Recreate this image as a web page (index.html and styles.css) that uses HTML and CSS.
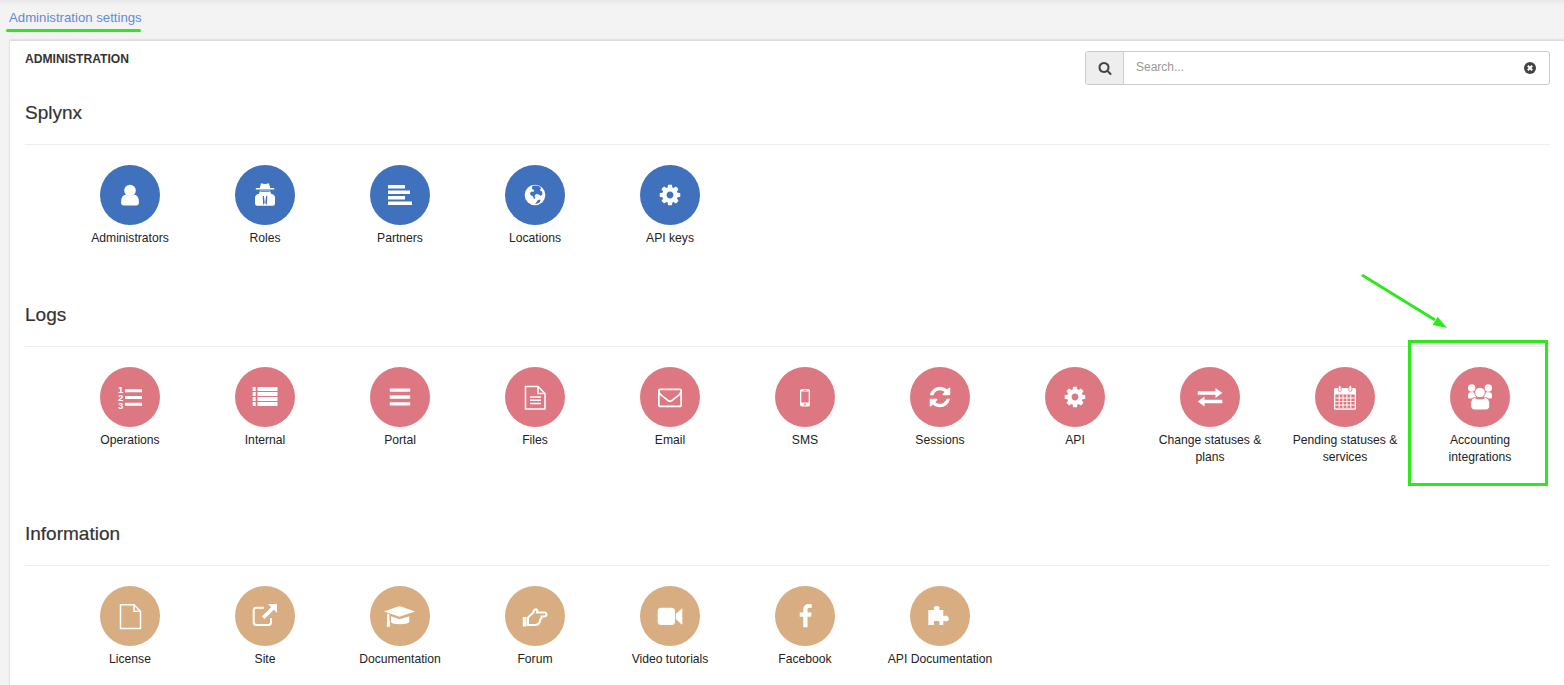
FILE: index.html
```html
<!DOCTYPE html>
<html>
<head>
  <meta charset="UTF-8"/>
  <title>Administration</title>
  <link rel="stylesheet" href="styles.css">
</head>
<body>
<div class="crumbs"><a href="#">Administration settings</a></div>

<div class="card">
  <div class="card-head">
    <div class="card-title">ADMINISTRATION</div>
    <div class="search">
      <span class="search-addon">
        <svg class="ic14" viewBox="0 0 1792 1792"><path d="M1216 832q0-185-131.5-316.5t-316.5-131.5-316.5 131.5-131.5 316.5 131.5 316.5 316.5 131.5 316.5-131.5 131.5-316.5zm512 832q0 52-38 90t-90 38q-54 0-90-38l-343-342q-179 124-399 124-143 0-273.5-55.5t-225-150-150-225-55.5-273.5 55.5-273.5 150-225 225-150 273.5-55.5 273.5 55.5 225 150 150 225 55.5 273.5q0 220-124 399l343 343q37 37 37 90z"/></svg>
      </span>
      <input class="search-input" type="text" placeholder="Search..."/>
      <svg class="search-clear" viewBox="0 0 12 12"><circle cx="6" cy="6" r="6"/><path d="M3.8 3.8l4.4 4.4M8.2 3.8l-4.4 4.4"/></svg>
    </div>
  </div>

  <!-- Splynx -->
  <div class="section section-first">
    <h3>Splynx</h3>
    <div class="items tone-blue">
      <a class="item"><span class="circle">
        <svg class="ic30" viewBox="0 0 30 30"><circle cx="15" cy="10.5" r="5.8"/><path d="M6 22.5q0-7.5 5-8 2 1.5 4 1.5t4-1.5q5 .5 5 8 0 3-3 3H9q-3 0-3-3z"/></svg>
      </span><span class="label">Administrators</span></a>
      <a class="item"><span class="circle">
        <svg class="ic30" viewBox="0 0 30 30"><path d="M9.800 8l1.200-4.700q4 1.400 8 0L20.200 8h4v1.400H5.800V8z"/><path d="M5 23.500v-6q0-2.700 4-3.700l1-3.300h10l1 3.300q4 1 4 3.700v6q0 2.200-2 2.200H7q-2 0-2-2.200z"/><path class="cut" d="M12.700 16h1.200l.8 7-1.500 2zM16.100 16h1.200l-.5 9-1.500-2z"/><path class="cut" d="M10.300 10.700h9.400v1.100h-9.400z"/></svg>
      </span><span class="label">Roles</span></a>
      <a class="item"><span class="circle">
        <svg class="ic30" viewBox="0 0 30 30"><path d="M3 5h17v3.500H3zM3 10.500h22V14H3zM3 16h17v3.500H3zM3 21.500h24V25H3z"/></svg>
      </span><span class="label">Partners</span></a>
      <a class="item"><span class="circle">
        <svg class="ic30" viewBox="0 0 30 30"><circle cx="15" cy="15" r="10.300"/><path class="cut" d="M12 6.500l2-1 5 .5 2 2-1 2.500 2 1 .5 3-2 1.500-1.500-1.500-3-.5-1.500 2 1 2-1.500 1-1-2.500-2.500-1.500-.5-2 1.500-1.500 2 .5.500-2-2-1zM18 20l2.500-.5-.5 2.500-2.500 1.500-2.500.5z"/></svg>
      </span><span class="label">Locations</span></a>
      <a class="item"><span class="circle">
        <svg class="ic24" viewBox="0 0 1792 1792"><path d="M1152 896q0-106-75-181t-181-75-181 75-75 181 75 181 181 75 181-75 75-181zm512-109v222q0 12-8 23t-20 13l-185 28q-19 54-39 91 35 50 107 138 10 12 10 25t-9 23q-27 37-99 108t-94 71q-12 0-26-9l-138-108q-44 23-91 38-16 136-29 186-7 28-36 28h-222q-14 0-24.500-8.500t-11.500-21.500l-28-184q-49-16-90-37l-141 107q-10 9-25 9-14 0-25-11-126-114-165-168-7-10-7-23 0-12 8-23 15-21 51-66.500t54-70.500q-27-50-41-99l-183-27q-13-2-21-12.500t-8-23.500v-222q0-12 8-23t19-13l186-28q14-46 39-92-40-57-107-138-10-12-10-24 0-10 9-23 26-36 98.500-107.500t94.500-71.500q13 0 26 10l138 107q44-23 91-38 16-136 29-186 7-28 36-28h222q14 0 24.500 8.500t11.500 21.500l28 184q49 16 90 37l142-107q9-9 24-9 13 0 25 10 129 119 165 170 7 8 7 22 0 12-8 23-15 21-51 66.500t-54 70.500q26 50 41 98l183 28q13 2 21 12.500t8 23.500z"/></svg>
      </span><span class="label">API keys</span></a>
    </div>
  </div>

  <!-- Logs -->
  <div class="section">
    <h3>Logs</h3>
    <div class="items tone-pink">
      <a class="item"><span class="circle">
        <svg class="ic30" viewBox="0 0 30 30"><path d="M10 7.300h17v3H10zM10 14h17v3H10zM10 20.700h17v3H10z"/><text class="digit" x="3" y="10.600">1</text><text class="digit" x="3" y="18.800">2</text><text class="digit" x="3" y="27">3</text></svg>
      </span><span class="label">Operations</span></a>
      <a class="item"><span class="circle">
        <svg class="ic30" viewBox="0 0 30 30"><path d="M2.700 5h3v4h-3zM2.700 10h3v4h-3zM2.700 15h3v4h-3zM2.700 20h3v4h-3zM7.500 5h20v4h-20zM7.500 10h20v4h-20zM7.500 15h20v4h-20zM7.500 20h20v4h-20z"/></svg>
      </span><span class="label">Internal</span></a>
      <a class="item"><span class="circle">
        <svg class="ic24" viewBox="0 0 1792 1792"><path d="M1664 1344v128q0 26-19 45t-45 19h-1408q-26 0-45-19t-19-45v-128q0-26 19-45t45-19h1408q26 0 45 19t19 45zm0-512v128q0 26-19 45t-45 19h-1408q-26 0-45-19t-19-45v-128q0-26 19-45t45-19h1408q26 0 45 19t19 45zm0-512v128q0 26-19 45t-45 19h-1408q-26 0-45-19t-19-45v-128q0-26 19-45t45-19h1408q26 0 45 19t19 45z"/></svg>
      </span><span class="label">Portal</span></a>
      <a class="item"><span class="circle">
        <svg class="ic30" viewBox="0 0 30 30"><path class="line" d="M5.500 4.500H18L25 11.500V27H5.500zM18 4.500v7h7"/><path class="line" d="M10 15h11M10 18.300h11M10 21.600h11"/></svg>
      </span><span class="label">Files</span></a>
      <a class="item"><span class="circle">
        <svg class="ic24" viewBox="0 0 1792 1792"><path d="M1664 1504v-768q-32 36-69 66-268 206-426 338-51 43-83 67t-86.500 48.500-102.500 24.500h-2q-48 0-102.500-24.500t-86.500-48.500-83-67q-158-132-426-338-37-30-69-66v768q0 13 9.500 22.500t22.500 9.500h1472q13 0 22.500-9.500t9.500-22.500zm0-1051v-24.500l-.5-13-3-12.500-5.500-9-9-7.500-14-2.500h-1472q-13 0-22.500 9.500t-9.500 22.500q0 168 147 284 193 152 401 317 6 5 35 29.500t46 37.500 44.500 31.500 50.500 27.500 43 9h2q20 0 43-9t50.500-27.500 44.500-31.500 46-37.500 35-29.500q208-165 401-317 54-43 100.500-115.500t46.500-131.500zm128-37v1088q0 66-47 113t-113 47h-1472q-66 0-113-47t-47-113v-1088q0-66 47-113t113-47h1472q66 0 113 47t47 113z"/></svg>
      </span><span class="label">Email</span></a>
      <a class="item"><span class="circle">
        <svg class="ic30" viewBox="0 0 30 30"><rect x="10" y="7" width="10" height="17.500" rx="2"/><path class="cut" d="M11.300 9.500h7.400v11h-7.400zM13.500 8h3v.7h-3z"/><circle class="cut" cx="15" cy="22.500" r=".9"/></svg>
      </span><span class="label">SMS</span></a>
      <a class="item"><span class="circle">
        <svg class="ic24" viewBox="0 0 1792 1792"><path d="M1639 1056q0 5-1 7-64 268-268 434.500t-478 166.500q-146 0-282.500-55t-243.500-157l-129 129q-19 19-45 19t-45-19-19-45v-448q0-26 19-45t45-19h448q26 0 45 19t19 45-19 45l-137 137q71 66 161 102t187 36q134 0 250-65t186-179q11-17 53-117 8-23 30-23h192q13 0 22.500 9.500t9.500 22.500zm25-800v448q0 26-19 45t-45 19h-448q-26 0-45-19t-19-45 19-45l138-138q-148-137-349-137-134 0-250 65t-186 179q-11 17-53 117-8 23-30 23h-199q-13 0-22.500-9.500t-9.500-22.500v-7q65-268 270-434.500t480-166.500q146 0 284 55.500t245 156.500l130-129q19-19 45-19t45 19 19 45z"/></svg>
      </span><span class="label">Sessions</span></a>
      <a class="item"><span class="circle">
        <svg class="ic24" viewBox="0 0 1792 1792"><path d="M1152 896q0-106-75-181t-181-75-181 75-75 181 75 181 181 75 181-75 75-181zm512-109v222q0 12-8 23t-20 13l-185 28q-19 54-39 91 35 50 107 138 10 12 10 25t-9 23q-27 37-99 108t-94 71q-12 0-26-9l-138-108q-44 23-91 38-16 136-29 186-7 28-36 28h-222q-14 0-24.500-8.500t-11.500-21.500l-28-184q-49-16-90-37l-141 107q-10 9-25 9-14 0-25-11-126-114-165-168-7-10-7-23 0-12 8-23 15-21 51-66.500t54-70.500q-27-50-41-99l-183-27q-13-2-21-12.500t-8-23.500v-222q0-12 8-23t19-13l186-28q14-46 39-92-40-57-107-138-10-12-10-24 0-10 9-23 26-36 98.500-107.500t94.500-71.500q13 0 26 10l138 107q44-23 91-38 16-136 29-186 7-28 36-28h222q14 0 24.500 8.500t11.500 21.500l28 184q49 16 90 37l142-107q9-9 24-9 13 0 25 10 129 119 165 170 7 8 7 22 0 12-8 23-15 21-51 66.500t-54 70.500q26 50 41 98l183 28q13 2 21 12.500t8 23.500z"/></svg>
      </span><span class="label">API</span></a>
      <a class="item"><span class="circle">
        <svg class="ic30" viewBox="0 0 30 30"><path d="M2.700 9.300H20.500V6l6.800 5-6.800 5v-3.300H2.700zM27.300 17.800H9.500v-3.300l-6.800 5 6.800 5v-3.300h17.800z"/></svg>
      </span><span class="label">Change statuses &amp; plans</span></a>
      <a class="item"><span class="circle">
        <svg class="ic30" viewBox="0 0 30 30"><rect x="4" y="6" width="22" height="21.700" rx="1.500"/><path class="cut" d="M5.300 12.500h19.400v13.900H5.300z"/><path class="line thin" d="M9.200 12.500v13.900M13 12.500v13.900M16.900 12.500v13.900M20.800 12.500v13.900M5.300 16h19.400M5.300 19.500h19.400M5.300 23h19.400"/><rect class="ring" x="8.200" y="3.500" width="3" height="6" rx="1.500"/><rect class="ring" x="18.800" y="3.500" width="3" height="6" rx="1.500"/></svg>
      </span><span class="label">Pending statuses &amp; services</span></a>
      <a class="item"><span class="circle">
        <svg class="ic30" viewBox="0 0 30 30"><circle cx="6.700" cy="6" r="3.700"/><circle cx="23.300" cy="6" r="3.700"/><path d="M3 15v-2q0-2.500 2.500-2.800h3q2.500.3 2.500 2.800v3.500H4.500Q3 16.500 3 15z"/><path d="M27 15v-2q0-2.500-2.500-2.800h-3q-2.500.3-2.500 2.800v3.500h6.500q1.500 0 1.500-1.500z"/><circle class="edge" cx="15" cy="10.500" r="5.300"/><path class="edge" d="M5.700 23.500v-3q0-4.500 4-5 2.500 1.500 5.300 1.500t5.300-1.500q4 .5 4.500 5v3q0 4.500-4.500 4.500h-10q-4.600 0-4.600-4.500z"/></svg>
      </span><span class="label">Accounting integrations</span></a>
    </div>
  </div>

  <!-- Information -->
  <div class="section">
    <h3>Information</h3>
    <div class="items tone-tan">
      <a class="item"><span class="circle">
        <svg class="ic30" viewBox="0 0 30 30"><path class="line" d="M5.500 3.800H19L25.500 10.300V27.500H5.500zM19 3.800v6.500h6.500"/></svg>
      </span><span class="label">License</span></a>
      <a class="item"><span class="circle">
        <svg class="ic30" viewBox="0 0 30 30"><path class="line wide" d="M14 6.700H6.500Q3.700 6.700 3.700 9.500v11.700Q3.700 24 6.500 24h11.700q2.800 0 2.800-2.800V17"/><path d="M18 3h9v9l-3.200-3.200-9.300 9.300-2.600-2.600 9.300-9.300z"/></svg>
      </span><span class="label">Site</span></a>
      <a class="item"><span class="circle">
        <svg class="ic34" viewBox="0 0 34 30"><path d="M16.500 5L32 10.500 16.500 15.800 1 10.500z"/><path d="M8 15.300l8.500 2.900 9.800-3v5.300q0 2.700-9.300 2.700T8 20.500z"/><path d="M4.300 12.500l2 .7.700 12.500H3.800z"/></svg>
      </span><span class="label">Documentation</span></a>
      <a class="item"><span class="circle">
        <svg class="ic30" viewBox="0 0 30 30"><path d="M2.700 16h3.800v9.500H2.700z"/><path class="line wide" d="M8 16.500l5.300-5q.7-3.200 2.700-3.200 2 .3 1 3.200h8q1.500.4 1.500 1.800 0 2.200-2.500 2.200h-2.500q.2 2.500-1.500 3.500 0 4.500-4.500 5H8z"/></svg>
      </span><span class="label">Forum</span></a>
      <a class="item"><span class="circle">
        <svg class="ic30" viewBox="0 0 30 30"><rect x="2.700" y="6.700" width="17.300" height="17.300" rx="3.500"/><path d="M20.800 13l6-5.500h.5v16h-.5l-6-5.500z"/></svg>
      </span><span class="label">Video tutorials</span></a>
      <a class="item"><span class="circle">
        <svg class="ic25" viewBox="0 0 1792 1792"><path d="M1343 12v264h-157q-86 0-116 36t-30 108v189h293l-39 296h-254v759h-306v-759h-255v-296h255v-218q0-186 104-288.500t277-102.500q147 0 228 12z"/></svg>
      </span><span class="label">Facebook</span></a>
      <a class="item"><span class="circle">
        <svg class="ic30" viewBox="0 0 30 30"><path d="M3.300 9h5.300q1.200-.5.300-1.500-.9-2 2.800-2.500 3.700.5 2.800 2.500-.9 1 .3 1.500h3.500v5.500q.5 1.300 1.500.3 2.200-.8 3.500 1.500 1.500 2.200-.5 3.500-1.800 1-3 .2-1.500-.8-1.500.3V24h-3.500q-1.200-.5-.3-1.500.9-2.500-2.800-2.800-3.700.3-2.800 2.800.9 1-.3 1.500H3.300z"/></svg>
      </span><span class="label">API Documentation</span></a>
    </div>
  </div>
</div>

<!-- green annotations drawn on top of the screenshot -->
<div class="mark-line"></div>
<div class="mark-box"></div>
<svg class="mark-arrow" viewBox="0 0 100 65"><path class="mark-shaft" d="M7 5L80 50"/><path class="mark-head" d="M92 58L82.700 46.700 77.700 55z"/></svg>
</body>
</html>
```

FILE: styles.css
```css
html, body { height: 685px; overflow: hidden; }

body { margin: 0; position: relative; font: 12.15px/17px "Liberation Sans", Arial, sans-serif; color: #222; background: #f3f3f3; }

.crumbs { height: 40px; padding: 9px 0 0 9px; box-sizing: border-box; font-size: 13.2px; line-height: 18px; background: linear-gradient(#e6e6e6, #f3f3f3 5px); }
.crumbs a { color: #5f8bd6; text-decoration: none; }

/* ========== card ========== */
.card { margin-left: 10px; padding: 0 14px 0 15px; background: #fff; border-top: 1px solid #ddd; box-shadow: 0 0 2px rgba(0, 0, 0, .2); height: 660px; }

.card-head { display: flex; justify-content: space-between; padding-top: 10px; }
.card-title { font-size: 12.1px; line-height: 16px; font-weight: bold; color: #333; }

.search { display: flex; align-items: center; width: 465px; height: 34px; box-sizing: border-box; border: 1px solid #ccc; border-radius: 3px; }
.search-addon { display: flex; align-items: center; justify-content: center; width: 37px; height: 100%; background: #eee; border-right: 1px solid #ccc; border-radius: 3px 0 0 3px; }
.search-addon svg { fill: #444; }
.search-input { flex: 1; min-width: 0; height: 100%; padding: 0 12px 2px; box-sizing: border-box; border: 0; outline: 0; background: none; font: 12px "Liberation Sans", Arial, sans-serif; }
.search-input::placeholder { color: #999; }
.search-clear { width: 12px; height: 12px; margin-right: 13px; }
.search-clear circle { fill: #444; }
.search-clear path { stroke: #fff; stroke-width: 2; fill: none; }

/* ========== sections ========== */
.section { margin-top: 58px; }
.section-first { margin-top: 18px; }
.section h3 { margin: 0; padding-bottom: 21px; border-bottom: 1px solid #eee; font-size: 19px; line-height: 20px; font-weight: normal; color: #333; -webkit-text-stroke: .2px #333; }

.items { display: flex; padding: 20px 0 0 37.5px; }
.item { flex: 0 0 135px; display: flex; flex-direction: column; align-items: center; text-align: center; }
.circle { flex: none; display: flex; align-items: center; justify-content: center; width: 60px; height: 60px; border-radius: 50%; background: var(--tone); margin-bottom: 5px; }
.label { display: block; padding: 0 12px; }

.tone-blue { --tone: #3f71bd; }
.tone-pink { --tone: #dd7781; }
.tone-tan { --tone: #d8ad81; }

/* ========== icons ========== */
.circle svg { fill: #fff; }
.ic14 { width: 14px; height: 14px; }
.ic24 { width: 24px; height: 24px; }
.ic25 { width: 25px; height: 25px; }
.ic30 { width: 30px; height: 30px; }
.ic34 { width: 34px; height: 30px; }

.circle svg .cut { fill: var(--tone); }
.circle svg .line { fill: none; stroke: #fff; stroke-width: 1.5; }
.circle svg .line.thin { stroke-width: 1; }
.circle svg .line.wide { stroke-width: 2; }
.circle svg .ring { stroke: var(--tone); stroke-width: .8; }
.circle svg .edge { stroke: var(--tone); stroke-width: 1; }
.digit { font: bold 9.5px "Liberation Sans", Arial, sans-serif; }

/* ========== annotations ========== */
.mark-line { position: absolute; left: 6px; top: 29px; width: 135px; height: 3px; background: #2ee81e; border-radius: 2px; }
.mark-box { position: absolute; left: 1408px; top: 340px; width: 140px; height: 146px; box-sizing: border-box; border: 3px solid #2ee81e; }
.mark-arrow { position: absolute; left: 1355px; top: 270px; width: 100px; height: 65px; }
.mark-shaft { stroke: #2ee81e; stroke-width: 3; fill: none; }
.mark-head { fill: #2ee81e; }
```
